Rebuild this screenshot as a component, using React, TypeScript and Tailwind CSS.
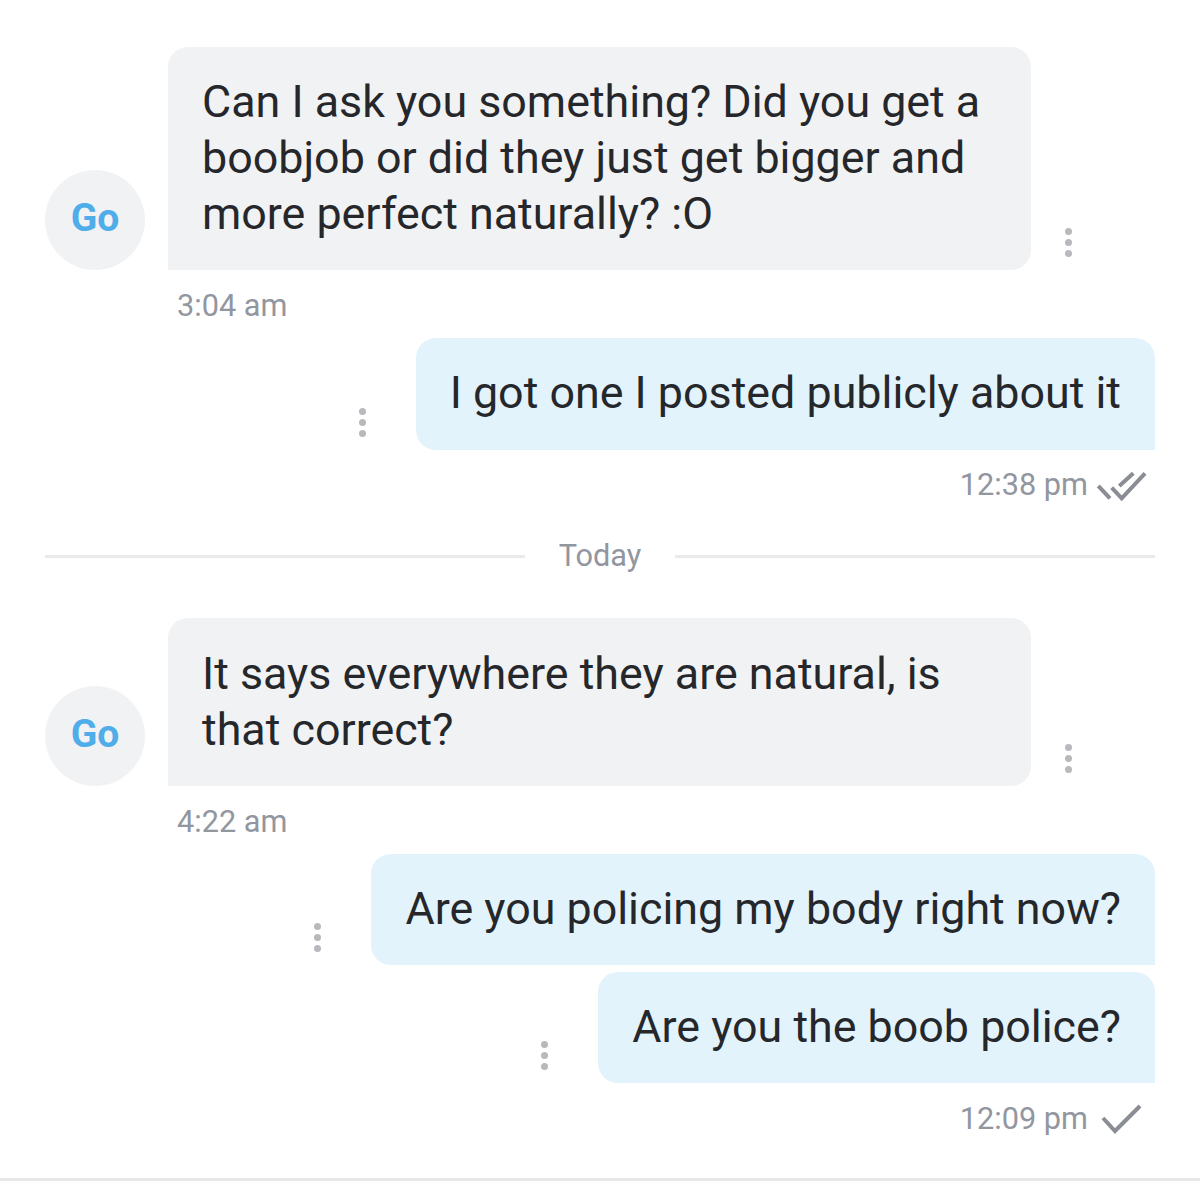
const Kebab = () => (
  <div className="flex w-[8px] flex-col gap-[4px]">
    <div className="h-[7px] w-[7px] rounded-full bg-[#b8b9bd]" />
    <div className="h-[7px] w-[7px] rounded-full bg-[#b8b9bd]" />
    <div className="h-[7px] w-[7px] rounded-full bg-[#b8b9bd]" />
  </div>
);

const Received = ({ lines, time, pad }: { lines: string[]; time: string; pad: string }) => (
  <div>
    <div className="flex items-end">
      <div className="flex h-[100px] w-[100px] shrink-0 items-center justify-center rounded-full bg-[#f1f2f4] pb-[3px] text-[39px] font-bold text-[#4fade9]">
        Go
      </div>
      <div className={`ml-[23px] w-[863px] rounded-[20px] rounded-bl-none bg-[#f1f2f4] px-[34px] text-[44.8px] leading-[56px] text-[#25272b] ${pad}`}>
        {lines.map((line) => (
          <div key={line} className="whitespace-nowrap">{line}</div>
        ))}
      </div>
      <div className="mb-[13px] ml-[34px]">
        <Kebab />
      </div>
    </div>
    <div className="ml-[132px] mt-[18px] h-[35px] text-[30.7px] leading-[36px] text-[#92969f]">{time}</div>
  </div>
);

const Sent = ({ text, className }: { text: string; className: string }) => (
  <div className={`flex items-end justify-end ${className}`}>
    <div className="mb-[13px] mr-[49px]">
      <Kebab />
    </div>
    <div className="whitespace-nowrap rounded-[20px] rounded-br-none bg-[#e2f3fc] px-[34px] pt-[27px] pb-[28px] text-[44.8px] leading-[56px] text-[#25272b]">
      {text}
    </div>
  </div>
);

const SentTime = ({ time, className, children }: { time: string; className: string; children: React.ReactNode }) => (
  <div className={`flex h-[36px] items-center justify-end pr-[6px] text-[30.7px] leading-[36px] text-[#92969f] ${className}`}>
    {time}
    <div className="ml-[9px]">{children}</div>
  </div>
);

export default function App() {
  return (
    <div className="h-[1181px] w-full overflow-hidden bg-white" style={{ fontFamily: "Roboto, sans-serif" }}>
      <div className="h-[1178px] px-[45px] pt-[47px]">
        <Received
          lines={["Can I ask you something? Did you get a", "boobjob or did they just get bigger and", "more perfect naturally? :O"]}
          time="3:04 am"
          pad="pt-[27px] pb-[28px]"
        />
        <Sent text="I got one I posted publicly about it" className="mt-[15px] [&>div:last-child]:pb-[29px]" />
        <SentTime time="12:38 pm" className="mt-[17px]">
          <svg width="52" height="32" viewBox="0 0 52 32" fill="none" stroke="#8a8d93" strokeWidth="4" className="block">
            <path d="M1.3 17 L13 29.3" />
            <path d="M14.7 18.7 L24.7 29.3 L48 4.3" />
            <path d="M22.3 17 L36.3 4.3" />
          </svg>
        </SentTime>

        <div className="mt-[35px] flex h-[36px] items-center">
          <div className="h-[3px] flex-1 bg-[#e9eaec]" />
          <div className="w-[150px] text-center text-[30.7px] text-[#92969f]">Today</div>
          <div className="h-[3px] flex-1 bg-[#e9eaec]" />
        </div>

        <div className="mt-[44px]">
          <Received lines={["It says everywhere they are natural, is", "that correct?"]} time="4:22 am" pad="pt-[28px] pb-[28px]" />
        </div>
        <Sent text="Are you policing my body right now?" className="mt-[15px]" />
        <Sent text="Are you the boob police?" className="mt-[7px]" />
        <SentTime time="12:09 pm" className="mt-[18px]">
          <svg width="52" height="32" viewBox="0 0 52 32" fill="none" stroke="#8a8d93" strokeWidth="4" className="block">
            <path d="M6 15 L18 28 L43 3" />
          </svg>
        </SentTime>
      </div>
      <div className="h-[3px] bg-[#e8e8ea]" />
    </div>
  );
}
